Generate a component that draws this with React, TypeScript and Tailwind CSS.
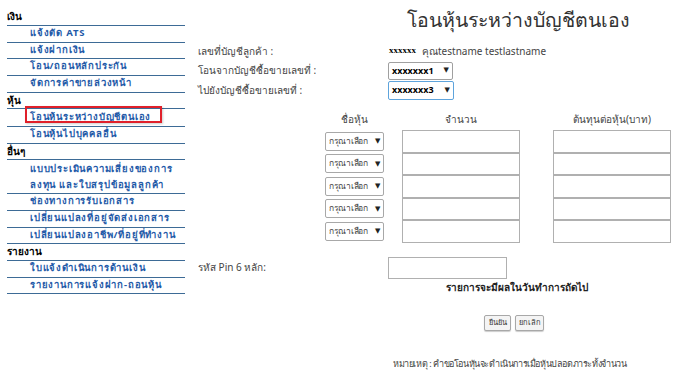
import React from 'react';

type NavRow = { label: string; header?: boolean; active?: boolean; h: string; lines?: string[] };

const nav: NavRow[] = [
  { label: 'เงิน', header: true, h: 'h-[17px]' },
  { label: 'แจ้งตัด ATS', h: 'h-[17px]' },
  { label: 'แจ้งฝากเงิน', h: 'h-[16px]' },
  { label: 'โอน/ถอนหลักประกัน', h: 'h-[17px]' },
  { label: 'จัดการค่าขายล่วงหน้า', h: 'h-[17px]' },
  { label: 'หุ้น', header: true, h: 'h-[16px]' },
  { label: 'โอนหุ้นระหว่างบัญชีตนเอง', active: true, h: 'h-[18px]' },
  { label: 'โอนหุ้นไปบุคคลอื่น', h: 'h-[17px]' },
  { label: 'อื่นๆ', header: true, h: 'h-[16px]' },
  { label: '', lines: ['แบบประเมินความเสี่ยงของการ', 'ลงทุน และใบสรุปข้อมูลลูกค้า'], h: 'h-[34px]' },
  { label: 'ช่องทางการรับเอกสาร', h: 'h-[17px]' },
  { label: 'เปลี่ยนแปลงที่อยู่จัดส่งเอกสาร', h: 'h-[17px]' },
  { label: 'เปลี่ยนแปลงอาชีพ/ที่อยู่ที่ทำงาน', h: 'h-[16px]' },
  { label: 'รายงาน', header: true, h: 'h-[17px]' },
  { label: 'ใบแจ้งดำเนินการด้านเงิน', h: 'h-[17px]' },
  { label: 'รายงานการแจ้งฝาก-ถอนหุ้น', h: 'h-[16px]' },
];

const font = { fontFamily: 'Tahoma, "Noto Sans", "DejaVu Sans", sans-serif' };

const Select: React.FC<{ value: string; className?: string }> = ({ value, className }) => (
  <div className={`flex items-center justify-between whitespace-nowrap bg-white border rounded-[2px] px-[3px] ${className ?? ''}`}>
    <span>{value}</span>
    <span className="text-[7px] text-[#222]">▼</span>
  </div>
);

export default function App() {
  return (
    <div className="w-[680px] h-[387px] bg-white flex overflow-hidden text-[#333] whitespace-nowrap" style={font}>
      <aside className="w-[185px] shrink-0 pl-[7px] pt-[9px]">
        {nav.map((r, i) => (
          <div key={i} className={`${r.h} border-b border-[#3d6b96] flex flex-col justify-center`}>
            {r.header ? (
              <span className="text-[10px] font-bold text-black leading-none pb-[2px]">{r.label}</span>
            ) : r.lines ? (
              r.lines.map((l) => (
                <span key={l} className="pl-[23px] text-[9.5px] font-bold text-[#1f5aa8] tracking-[0.8px] leading-[16px]">{l}</span>
              ))
            ) : (
              <div className="relative">
                {r.active && (
                  <div className="absolute left-[18px] top-[-6px] w-[137px] h-[17px] border-[2px] border-[#e0202a] shadow-[1px_1px_2px_rgba(0,0,0,0.2)]" />
                )}
                <span className="pl-[23px] text-[9.5px] font-bold text-[#1f5aa8] tracking-[0.8px] leading-none pb-[2px] block">{r.label}</span>
              </div>
            )}
          </div>
        ))}
      </aside>

      <main className="flex-1 pl-[13px] text-[10px] text-[#444]">
        <h1 className="pl-[209px] pt-[9px] text-[19.5px] font-light text-[#333] leading-[22px]">โอนหุ้นระหว่างบัญชีตนเอง</h1>

        <div className="mt-[10px] grid grid-cols-[190px_1fr] items-center">
          <div className="h-[20px] flex items-center">เลขที่บัญชีลูกค้า :</div>
          <div className="h-[20px] flex items-center gap-[6px] pl-[1px]">
            <span className="font-bold text-black text-[9px]" style={{ fontFamily: '"Liberation Serif", serif' }}>xxxxxx</span>
            <span>คุณtestname testlastname</span>
          </div>
          <div className="h-[19px] flex items-center">โอนจากบัญชีซื้อขายเลขที่ :</div>
          <div className="h-[19px] flex items-center">
            <Select value="xxxxxxx1" className="w-[65px] h-[18px] border-[#a0a0a0] text-[9px] font-bold text-black" />
          </div>
          <div className="h-[20px] flex items-center">ไปยังบัญชีซื้อขายเลขที่ :</div>
          <div className="h-[20px] flex items-center">
            <Select value="xxxxxxx3" className="w-[66px] h-[19px] border-[#5ea4dc] text-[9px] font-bold text-black" />
          </div>
        </div>

        <div className="mt-[10px] pl-[127px]">
          <div className="flex h-[18px] items-center">
            <div className="w-[59px] text-center">ชื่อหุ้น</div>
            <div className="w-[118px] ml-[18px] text-center">จำนวน</div>
            <div className="w-[118px] ml-[33px] text-center">ต้นทุนต่อหุ้น(บาท)</div>
          </div>
          <div className="mt-[2px]">
            {[0, 1, 2, 3, 4].map((i) => (
              <div key={i} className="flex items-center h-[22.5px]">
                <Select value="กรุณาเลือก" className="w-[59px] h-[19px] border-[#a8a8a8] text-[8.5px] tracking-[-0.3px] text-[#444]" />
                <div className="w-[118px] h-full ml-[18px] border border-[#b0b0b0] bg-white" />
                <div className="w-[118px] h-full ml-[33px] border border-[#b0b0b0] bg-white" />
              </div>
            ))}
          </div>
        </div>

        <div className="mt-[14px] flex items-center">
          <div className="w-[190px]">รหัส Pin 6 หลัก:</div>
          <div className="w-[119px] h-[22px] border border-[#b0b0b0] bg-white" />
        </div>
        <div className="mt-[1px] pl-[248px] text-[10px] font-bold text-[#222]">รายการจะมีผลในวันทำการถัดไป</div>

        <div className="mt-[20px] pl-[286px] flex gap-[4px]">
          <button className="w-[27px] h-[16px] border border-[#a8a8a8] rounded-[2px] bg-[#f4f4f4] text-[7.5px] text-[#333] leading-none shadow-[0_1px_1px_rgba(0,0,0,0.2)]">ยืนยัน</button>
          <button className="w-[29px] h-[16px] border border-[#a8a8a8] rounded-[2px] bg-[#f4f4f4] text-[7.5px] text-[#333] leading-none shadow-[0_1px_1px_rgba(0,0,0,0.2)]">ยกเลิก</button>
        </div>

        <div className="mt-[26px] pl-[195px] text-[9px] tracking-[-0.4px]">หมายเหตุ : คำขอโอนหุ้นจะดำเนินการเมื่อหุ้นปลอดภาระทั้งจำนวน</div>
      </main>
    </div>
  );
}
